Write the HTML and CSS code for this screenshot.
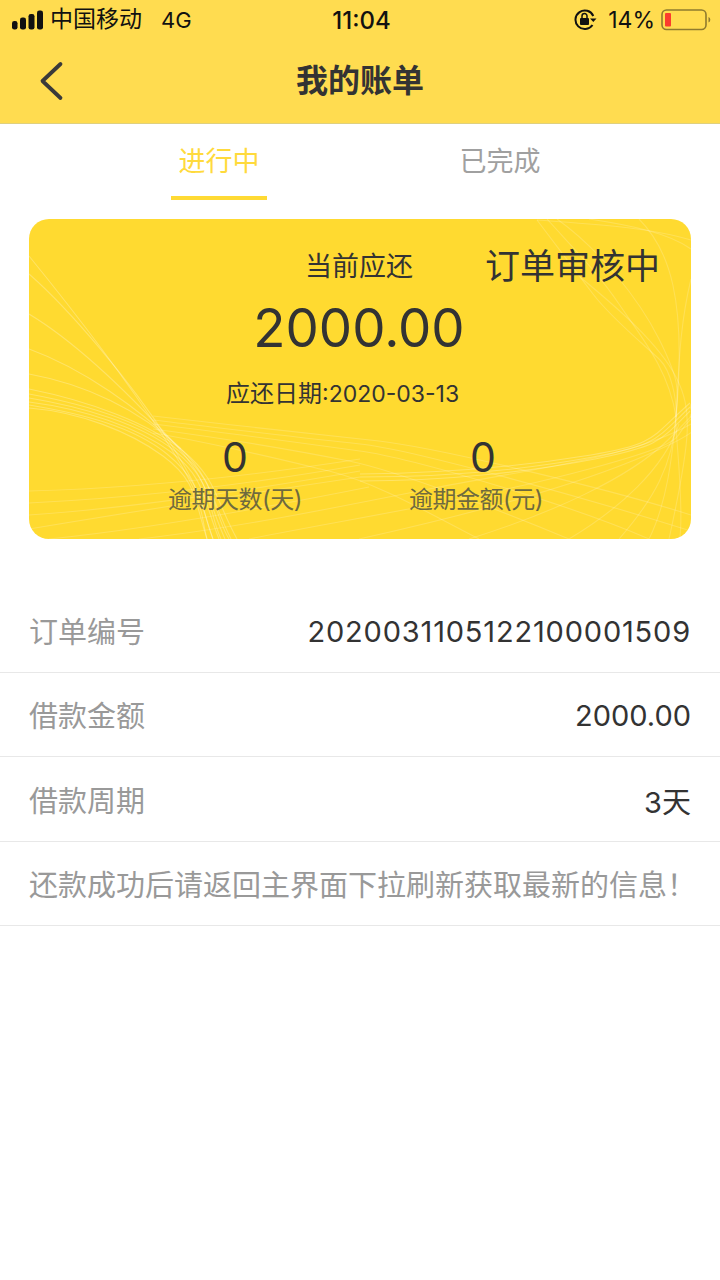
FILE: index.html
```html
<!DOCTYPE html>
<html lang="zh-CN">
<head>
<meta charset="utf-8">
<title>我的账单</title>
<link rel="stylesheet" href="styles.css">
</head>
<body>
<header class="top">
  <div class="status">
    <div class="status-left">
      <svg class="signal" width="31" height="20" viewBox="0 0 31 20"><rect x="0" y="11" width="5.500" height="8.500" rx="2.300"/><rect x="8" y="7.500" width="6" height="12" rx="2.300"/><rect x="16.500" y="4" width="6" height="15.500" rx="2.300"/><rect x="25" y="0.500" width="6" height="19" rx="2.300"/></svg>
      <span class="carrier">中国移动</span>
      <span class="net">4G</span>
    </div>
    <div class="time">11:04</div>
    <div class="status-right">
      <svg class="lock" width="24" height="22" viewBox="0 0 24 22"><path d="M18.500 16A9.300 9.300 0 1 1 19.300 7" fill="none" stroke="#111" stroke-width="2"/><path d="M16 9.500h6.500l-3.200 3.600z" fill="#111"/><rect x="6" y="9" width="9" height="7" rx="1" fill="#111"/><path d="M8 9V7a2.500 2.500 0 0 1 5 0v2" fill="none" stroke="#111" stroke-width="1.500"/></svg>
      <span class="pct">14%</span>
      <svg class="battery" width="50" height="22" viewBox="0 0 50 22"><rect x="1" y="1" width="44" height="19.500" rx="4.500" fill="none" stroke="#8f7b2e" stroke-width="1.600"/><rect x="4" y="4" width="6" height="13.500" rx="1" fill="#fb3c2d"/><path d="M47.500 8a3 3 0 0 1 0 5.500z" fill="#8f7b2e"/></svg>
    </div>
  </div>
  <div class="nav">
    <svg class="back" width="26" height="40" viewBox="0 0 26 40"><path d="M22.500 3 4.500 20 22.500 37" fill="none" stroke="#3a3a3a" stroke-width="3.800" stroke-linecap="round" stroke-linejoin="round"/></svg>
    <h1 class="title">我的账单</h1>
  </div>
</header>
<nav class="tabs">
  <div class="tab tab-on"><span class="tab-label">进行中</span></div>
  <div class="tab"><span class="tab-label">已完成</span></div>
</nav>
<section class="card">
  <svg class="waves" viewBox="0 0 662 320" fill="none" stroke="#fff">
    <g stroke-opacity=".26" stroke-width="1.100">
      <path d="M0 189C50 193 100 212 134 237S165 280 178 320"/>
      <path d="M0 186C55 195 105 208 138 235S170 280 184 320"/>
      <path d="M0 183C55 190 108 208 142 233S174 280 190 320"/>
      <path d="M0 179C55 188 112 205 146 232S178 280 196 320"/>
      <path d="M0 175C60 186 116 204 150 232S182 280 202 320"/>
      <path d="M0 170C60 182 120 204 154 232S186 280 208 320"/>
      <path d="M0 37C35 80 90 150 134 217S170 290 178 320"/>
      <path d="M0 55C40 90 100 160 140 222S172 290 184 320"/>
      <path d="M0 95C50 125 105 180 146 225S178 290 192 320"/>
      <path d="M0 130C55 150 110 190 150 228S182 290 200 320"/>
      <path d="M0 155C55 165 110 190 152 230"/>
      <path d="M331 258C420 258 500 250 564 238S625 222 661 188"/>
      <path d="M331 262C420 262 505 252 566 240S630 224 661 192"/>
      <path d="M331 255C420 254 495 247 562 236S622 218 661 184"/>
    </g>
    <g stroke-opacity=".18" stroke-width="1.100">
      <path d="M124 201C200 210 280 220 331 225S560 280 662 312"/>
      <path d="M124 205C200 214 280 225 331 232S540 285 620 320"/>
      <path d="M124 197C200 206 290 215 350 222S580 270 662 296"/>
      <path d="M124 210C200 220 270 232 320 242S480 295 540 320"/>
      <path d="M124 214C190 225 250 240 300 252S410 300 450 320"/>
      <path d="M0 310C60 300 150 285 331 258"/>
      <path d="M0 296C60 292 170 280 331 252"/>
      <path d="M0 284C80 280 180 272 331 246"/>
      <path d="M0 272C80 270 190 262 331 240"/>
      <path d="M20 320C120 310 230 290 340 268"/>
      <path d="M110 320C200 310 300 290 400 270S600 240 662 205"/>
      <path d="M220 320C320 300 450 280 560 250S640 220 662 200"/>
      <path d="M330 320C420 300 540 270 620 235S655 205 662 195"/>
      <path d="M440 320C520 295 600 260 640 220S658 200 662 185"/>
      <path d="M540 320C590 290 635 250 650 205"/>
      <path d="M508 1C530 30 545 50 564 75S620 130 631 141S648 180 647 198S655 280 651 318"/>
      <path d="M518 0C545 30 570 55 590 85S640 150 647 198"/>
      <path d="M528 0C570 30 610 80 630 120S650 170 647 198S640 280 620 320"/>
      <path d="M508 1C560 5 620 8 662 21"/>
      <path d="M560 0C600 6 640 14 662 30"/>
      <path d="M551 58C590 90 630 125 647 158S662 220 640 320"/>
      <path d="M610 0C640 30 658 80 647 198"/>
      <path d="M662 60C650 110 650 150 647 198S625 280 590 320"/>
    </g>
  </svg>
  <div class="due-row">
    <div class="due-label">当前应还</div>
    <div class="due-status">订单审核中</div>
  </div>
  <div class="amount">2000.00</div>
  <div class="due-date">应还日期<span class="due-num">:2020-03-13</span></div>
  <div class="stats">
    <div class="stat"><div class="stat-num">0</div><div class="stat-label">逾期天数(天)</div></div>
    <div class="stat"><div class="stat-num">0</div><div class="stat-label">逾期金额(元)</div></div>
  </div>
</section>
<section class="list">
  <div class="row"><span class="row-key">订单编号</span><span class="row-val row-id">2020031105122100001509</span></div>
  <div class="row"><span class="row-key">借款金额</span><span class="row-val">2000.00</span></div>
  <div class="row"><span class="row-key">借款周期</span><span class="row-val">3天</span></div>
  <div class="row"><span class="row-key row-note">还款成功后请返回主界面下拉刷新获取最新的信息！</span></div>
</section>
</body>
</html>
```
FILE: styles.css
```css
* { box-sizing: border-box; margin: 0; padding: 0; }
html, body { background: #fff; }
body {
  width: 720px;
  height: 1280px;
  overflow: hidden;
  font-family: "Inter", "Noto Sans CJK SC", sans-serif;
  color: #333;
}
.top {
  height: 124px;
  background: #ffdc50;
  border-bottom: 1px solid #dfd07e;
}
.status {
  height: 40px;
  padding: 0 9px 0 12px;
  display: grid;
  grid-template-columns: 1fr auto 1fr;
  align-items: center;
  color: #111;
  font-size: 23px;
}
.status-left { display: flex; align-items: center; }
.signal { fill: #111; margin-right: 7px; margin-top: -1px; }
.carrier { font-size: 23px; line-height: 30px; margin-top: -2px; }
.net { margin-left: 19px; font-size: 22px; }
.time { font-weight: 500; font-size: 24px; }
.status-right { display: flex; align-items: center; justify-content: flex-end; }
.pct { margin: 0 6px 0 10px; }
.nav {
  height: 83px;
  padding-bottom: 8px;
  position: relative;
  display: flex;
  align-items: center;
  justify-content: center;
}
.back { position: absolute; left: 38px; top: 21px; }
.title { font-size: 32px; font-weight: 700; color: #333; }
.tabs {
  height: 76px;
  padding-left: 78px;
  display: flex;
}
.tab { width: 282px; display: flex; justify-content: center; }
.tab + .tab { margin-left: -1px; }
.tab-label {
  width: 96px;
  height: 76px;
  padding-top: 18px;
  font-size: 27px;
  line-height: 40px;
  text-align: center;
  color: #a0a0a0;
}
.tab-on .tab-label { color: #ffda3c; border-bottom: 4px solid #ffda34; }
.card {
  position: relative;
  overflow: hidden;
  margin: 19px 29px 0;
  height: 320px;
  border-radius: 20px;
  background: #ffda30;
  color: #333;
}
.waves { position: absolute; inset: 0; width: 100%; height: 100%; }
.due-row {
  position: relative;
  height: 82px;
  padding: 14px 2px 0 0;
  display: grid;
  grid-template-columns: 1fr auto 1fr;
  align-items: center;
}
.due-label { grid-column: 2; font-size: 27px; line-height: 46px; }
.due-status { font-size: 35px; line-height: 44px; margin-top: -2px; justify-self: end; margin-right: 29px; white-space: nowrap; }
.amount { position: relative; padding-right: 2px; text-align: center; font-size: 52.800px; line-height: 54px; }
.due-date { position: relative; margin-top: 22px; padding-left: 197px; font-size: 24px; line-height: 34px; }
.due-num { font-size: 23px; }
.stats { position: relative; margin-top: 23px; padding-left: 82px; display: flex; }
.stat { width: 248px; text-align: center; }
.stat-num { font-size: 41px; line-height: 46px; }
.stat-label { font-size: 24px; line-height: 36px; margin-top: 2px; color: #6f6a3e; white-space: nowrap; letter-spacing: -.5px; }
.stat + .stat .stat-label { margin-right: 14px; }
.list { margin-top: 49px; }
.row {
  height: 84.500px;
  padding: 0 29px;
  display: flex;
  align-items: center;
  justify-content: space-between;
  border-bottom: 1px solid #e8e8e8;
  font-size: 29px;
}
.row-key { color: #999; }
.row-note { white-space: nowrap; }
.row-val { color: #333; margin-top: 3px; }
.row-id { letter-spacing: .82px; }
```
